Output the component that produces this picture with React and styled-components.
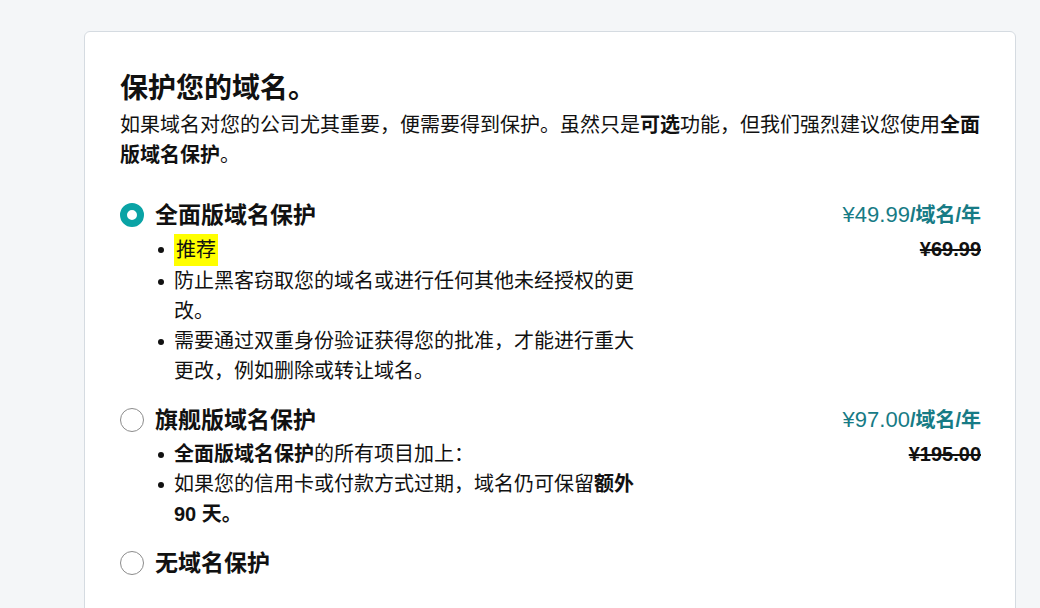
import React from 'react';
import styled, { createGlobalStyle } from 'styled-components';

const GlobalStyle = createGlobalStyle`
  body {
    margin: 0;
    background: #f4f6f8;
    font-family: "Liberation Sans", "Noto Sans CJK SC", sans-serif;
    color: #111;
  }
`;

const Page = styled.div`
  padding: 31px 0 0 84px;
  height: 577px;
  overflow: hidden;
`;

const Card = styled.section`
  width: 932px;
  box-sizing: border-box;
  background: #fff;
  border: 1px solid #d5dbe1;
  border-radius: 6px;
  padding: 39px 34px 60px 35px;
`;

const Title = styled.h2`
  margin: 0;
  font-size: 28px;
  line-height: 36px;
  font-weight: 700;
`;

const Intro = styled.p`
  margin: 3px 0 0;
  font-size: 20px;
  line-height: 30px;
`;

const Options = styled.div`
  margin-top: 30px;
  display: flex;
  flex-direction: column;
  gap: 19px;
`;

const Option = styled.div`
  display: grid;
  grid-template-columns: 24px 1fr auto;
  column-gap: 11px;
  align-items: start;
`;

const Radio = styled.span`
  display: block;
  width: 24px;
  height: 24px;
  margin-top: 3px;
  box-sizing: border-box;
  border-radius: 50%;
  border: ${p => (p.$checked ? '7px solid #0aa3a5' : '1.5px solid #8c8c8c')};
  background: #fff;
`;

const Label = styled.div`
  font-size: 23px;
  line-height: 30px;
  font-weight: 700;
`;

const Bullets = styled.ul`
  list-style: none;
  margin: 4px 0 0;
  padding: 0 0 0 19px;
  max-width: 470px;
  font-size: 20px;
  line-height: 30px;
`;

const Bullet = styled.li`
  position: relative;

  &::before {
    content: '';
    position: absolute;
    left: -16px;
    top: 13px;
    width: 6px;
    height: 6px;
    border-radius: 50%;
    background: #111;
  }
`;

const Highlight = styled.span`
  display: inline-block;
  padding: 1px 2px;
  background: #ffff00;
`;

const PriceCol = styled.div`
  text-align: right;
`;

const Price = styled.div`
  font-size: 22px;
  line-height: 30px;
  color: #177b85;

  b {
    font-size: 20px;
  }
`;

const OldPrice = styled.div`
  margin-top: 4px;
  font-size: 20px;
  line-height: 30px;
  font-weight: 700;
  text-decoration: line-through;
  text-decoration-thickness: 2px;
`;

const plans = [
  {
    name: '全面版域名保护',
    checked: true,
    price: '¥49.99',
    old: '¥69.99',
    items: [
      <Highlight key="h">推荐</Highlight>,
      '防止黑客窃取您的域名或进行任何其他未经授权的更改。',
      '需要通过双重身份验证获得您的批准，才能进行重大更改，例如删除或转让域名。',
    ],
  },
  {
    name: '旗舰版域名保护',
    price: '¥97.00',
    old: '¥195.00',
    items: [
      <><b>全面版域名保护</b>的所有项目加上：</>,
      <>如果您的信用卡或付款方式过期，域名仍可保留<b>额外 90 天。</b></>,
    ],
  },
  { name: '无域名保护', items: [] },
];

export default function App() {
  return (
    <Page>
      <GlobalStyle />
      <Card>
        <Title>保护您的域名。</Title>
        <Intro>
          如果域名对您的公司尤其重要，便需要得到保护。虽然只是<b>可选</b>功能，但我们强烈建议您使用<b>全面版域名保护</b>。
        </Intro>
        <Options>
          {plans.map(plan => (
            <Option key={plan.name}>
              <Radio $checked={plan.checked} />
              <div>
                <Label>{plan.name}</Label>
                {plan.items.length > 0 && (
                  <Bullets>
                    {plan.items.map((item, i) => (
                      <Bullet key={i}>{item}</Bullet>
                    ))}
                  </Bullets>
                )}
              </div>
              <PriceCol>
                {plan.price && (
                  <>
                    <Price>
                      {plan.price}<b>/域名/年</b>
                    </Price>
                    <OldPrice>{plan.old}</OldPrice>
                  </>
                )}
              </PriceCol>
            </Option>
          ))}
        </Options>
      </Card>
    </Page>
  );
}
